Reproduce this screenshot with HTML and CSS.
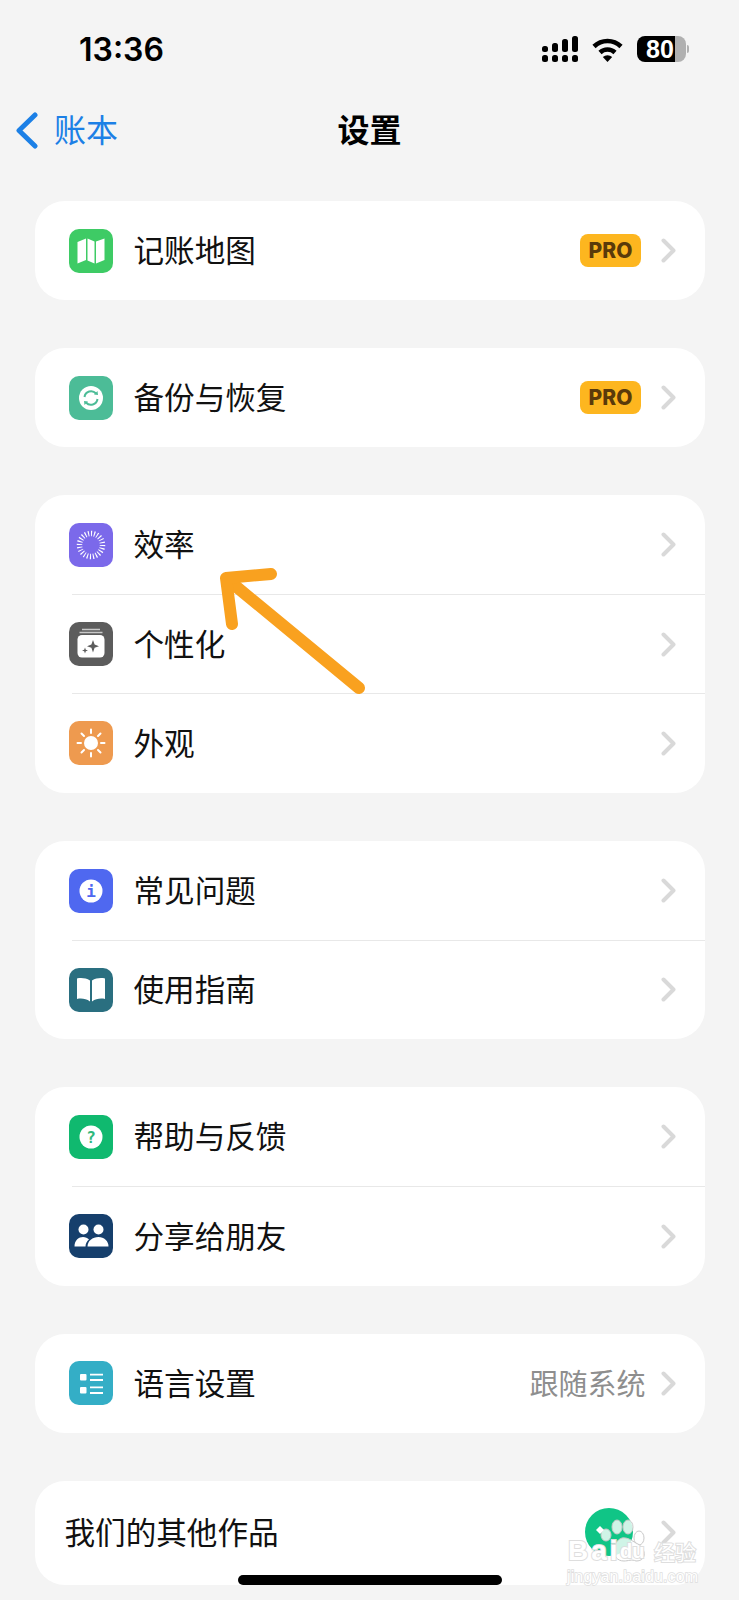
FILE: index.html
```html
<!DOCTYPE html>
<html lang="zh-CN">
<head>
  <meta charset="UTF-8">
  <meta name="viewport" content="width=device-width, initial-scale=1.0">
  <title>设置</title>
  <link rel="stylesheet" href="styles.css">
</head>
<body>
  <svg class="defs" width="0" height="0">
    <symbol id="chev" viewBox="0 0 15 25">
      <path d="M2.5 2.5 L12.5 12.5 L2.5 22.5" fill="none" stroke="currentColor" stroke-width="4" stroke-linecap="round" stroke-linejoin="round"/>
    </symbol>
  </svg>

  <div class="page">
    <div class="status-bar">
      <span class="time">13:36</span>
      <div class="status-icons">
        <svg class="signal" width="36" height="26" viewBox="0 0 36 26" fill="#000">
          <rect x="0" y="10" width="6" height="6" rx="2.5"/><rect x="0" y="19" width="6" height="7" rx="2.5"/>
          <rect x="10" y="7" width="6" height="9" rx="2.5"/><rect x="10" y="19" width="6" height="7" rx="2.5"/>
          <rect x="20" y="3" width="6" height="13" rx="2.5"/><rect x="20" y="19" width="6" height="7" rx="2.5"/>
          <rect x="30" y="0" width="6" height="16" rx="2.5"/><rect x="30" y="19" width="6" height="7" rx="2.5"/>
        </svg>
        <svg class="wifi" width="31" height="25" viewBox="0 0 31 25" fill="none" stroke="#000" stroke-width="4.6">
          <path d="M2 9.5 A19.5 19.5 0 0 1 29 9.5"/>
          <path d="M8 15.5 A11 11 0 0 1 23 15.5"/>
          <path d="M15.5 25 L10.8 20 A7 7 0 0 1 20.2 20 Z" fill="#000" stroke="none"/>
        </svg>
        <div class="battery">80</div>
      </div>
    </div>

    <div class="nav-bar">
      <div class="nav-back">
        <svg width="24" height="37" viewBox="0 0 24 37" fill="none" stroke="currentColor" stroke-width="5" stroke-linecap="round" stroke-linejoin="round">
          <path d="M20 3 L4 18.5 L20 34"/>
        </svg>
        <span class="nav-text">账本</span>
      </div>
      <div class="nav-title nav-text">设置</div>
    </div>

    <main class="cards">
      <section class="card">
        <div class="row">
          <svg class="icon bg-map" viewBox="0 0 44 44" fill="#fff">
            <path d="M8.5 13 L17 9.5 V31 L8.5 34.5 Z"/><path d="M18.5 9.5 L25.5 12.5 V34.5 L18.5 31.5 Z"/><path d="M27 12.5 L35.5 9.5 V31 L27 34.5 Z"/>
          </svg>
          <span class="label">记账地图</span>
          <span class="badge">PRO</span>
          <svg class="chevron"><use href="#chev"/></svg>
        </div>
      </section>

      <section class="card">
        <div class="row">
          <svg class="icon bg-sync" viewBox="0 0 44 44">
            <circle cx="22" cy="22" r="12" fill="#fff"/>
            <g fill="none" stroke="#4cbc97" stroke-width="2">
              <path d="M15.5 21 A6.6 6.6 0 0 1 27 17.5"/><path d="M28.5 23 A6.6 6.6 0 0 1 17 26.5"/>
            </g>
            <path d="M25 18.5 L29 19 L28.5 15 Z M19 25.5 L15 25 L15.5 29 Z" fill="#4cbc97"/>
          </svg>
          <span class="label">备份与恢复</span>
          <span class="badge">PRO</span>
          <svg class="chevron"><use href="#chev"/></svg>
        </div>
      </section>

      <section class="card">
        <div class="row">
          <svg class="icon bg-speed" viewBox="0 0 44 44">
            <circle cx="22" cy="22" r="11.5" fill="none" stroke="#fff" stroke-width="5.5" pathLength="24" stroke-dasharray=".36 .64"/>
          </svg>
          <span class="label">效率</span>
          <svg class="chevron"><use href="#chev"/></svg>
        </div>
        <div class="sep"></div>
        <div class="row">
          <svg class="icon bg-jar" viewBox="0 0 44 44">
            <path d="M13 7.5 H31 M10.5 10.5 H33.5" stroke="#c9c9c9" stroke-width="1.6" fill="none"/>
            <rect x="8.5" y="13" width="27" height="22.5" rx="4.5" fill="#fff"/>
            <path d="M24 18 L25.6 22.6 L30 24.2 L25.6 25.8 L24 30.4 L22.4 25.8 L18 24.2 L22.4 22.6 Z" fill="#5c5c5c"/>
            <path d="M16 25.5 L16.8 27.7 L19 28.5 L16.8 29.3 L16 31.5 L15.2 29.3 L13 28.5 L15.2 27.7 Z" fill="#5c5c5c"/>
          </svg>
          <span class="label">个性化</span>
          <svg class="chevron"><use href="#chev"/></svg>
        </div>
        <div class="sep"></div>
        <div class="row">
          <svg class="icon bg-sun" viewBox="0 0 44 44">
            <circle cx="22" cy="22" r="7" fill="#fff"/>
            <path d="M22 8.5 V12 M22 32 V35.5 M8.5 22 H12 M32 22 H35.5 M12.5 12.5 L15 15 M29 29 L31.5 31.5 M31.5 12.5 L29 15 M15 29 L12.5 31.5" stroke="#fff" stroke-width="2" stroke-linecap="round"/>
          </svg>
          <span class="label">外观</span>
          <svg class="chevron"><use href="#chev"/></svg>
        </div>
      </section>

      <section class="card">
        <div class="row">
          <svg class="icon bg-info" viewBox="0 0 44 44">
            <circle cx="22" cy="22" r="11.5" fill="#fff"/>
            <text x="22" y="27.5" class="glyph" fill="#4f68f0">i</text>
          </svg>
          <span class="label">常见问题</span>
          <svg class="chevron"><use href="#chev"/></svg>
        </div>
        <div class="sep"></div>
        <div class="row">
          <svg class="icon bg-book" viewBox="0 0 44 44" fill="#fff">
            <path d="M21 12.5 C17 10 12 9.5 8 10.5 V31 C12 30 17 30.5 21 33.5 Z"/>
            <path d="M23 12.5 C27 10 32 9.5 36 10.5 V31 C32 30 27 30.5 23 33.5 Z"/>
          </svg>
          <span class="label">使用指南</span>
          <svg class="chevron"><use href="#chev"/></svg>
        </div>
      </section>

      <section class="card">
        <div class="row">
          <svg class="icon bg-help" viewBox="0 0 44 44">
            <circle cx="22" cy="22" r="11.5" fill="#fff"/>
            <text x="22" y="27.5" class="glyph" fill="#2fb87c">?</text>
          </svg>
          <span class="label">帮助与反馈</span>
          <svg class="chevron"><use href="#chev"/></svg>
        </div>
        <div class="sep"></div>
        <div class="row">
          <svg class="icon bg-share" viewBox="0 0 44 44" fill="#fff">
            <circle cx="14.5" cy="15.5" r="5"/><circle cx="29.5" cy="15.5" r="5"/>
            <path d="M5.5 32.5 C5.5 26 10 23 14 23 C16.5 23 18.5 24 20 25.5 C18 27 16.5 29.5 16.5 32.5 Z"/>
            <path d="M18.5 32.5 C18.5 27 23.5 23 29.5 23 C35 23 39.5 27 39.5 32.5 Z"/>
          </svg>
          <span class="label">分享给朋友</span>
          <svg class="chevron"><use href="#chev"/></svg>
        </div>
      </section>

      <section class="card">
        <div class="row">
          <svg class="icon bg-lang" viewBox="0 0 44 44">
            <rect x="11" y="13" width="6.5" height="6.5" rx="1" fill="#fff"/>
            <rect x="11" y="26" width="6.5" height="6.5" rx="1" fill="#fff"/>
            <path d="M21 13.7 H34 M21 19 H34 M21 26.3 H34 M21 32 H34" stroke="#fff" stroke-width="1.8"/>
          </svg>
          <span class="label">语言设置</span>
          <span class="value">跟随系统</span>
          <svg class="chevron"><use href="#chev"/></svg>
        </div>
      </section>

      <section class="card">
        <div class="row row-plain">
          <span class="label">我们的其他作品</span>
          <svg class="chevron"><use href="#chev"/></svg>
        </div>
      </section>
    </main>

    <!-- annotation drawn on top of the screenshot -->
    <svg class="arrow" width="739" height="1600" viewBox="0 0 739 1600" fill="none" stroke="#f9a11f" stroke-width="12" stroke-linecap="round" stroke-linejoin="round">
      <path d="M359 688 L227 579"/>
      <path d="M271 574 L226 578 L232 624"/>
    </svg>

    <div class="home-bar"></div>

    <svg class="watermark" width="150" height="100" viewBox="0 0 150 100">
      <circle cx="49" cy="37" r="24" fill="#10c586"/>
      <g fill="#fff" fill-opacity=".8" stroke="#c9c9c9">
        <ellipse cx="46" cy="40" rx="5" ry="6"/>
        <ellipse cx="57" cy="32" rx="5" ry="7"/>
        <ellipse cx="68" cy="32" rx="5" ry="7"/>
        <ellipse cx="79" cy="43" rx="5" ry="7"/>
        <path d="M62 43 C52 46 50 66 64 66 C68 66 72 64 76 66 C88 66 86 52 76 48 C72 46 68 42 62 43 Z"/>
      </g>
      <path d="M36 35 L40 31 L44 35 L40 39 Z" fill="#fff"/>
      <g class="wm-text">
        <text x="8" y="65" class="wm-latin">Bai</text>
        <text x="60" y="63" class="wm-du">du</text>
        <text x="94" y="65" class="wm-cjk">经验</text>
        <text x="7" y="87" class="wm-url" textLength="131">jingyan.baidu.com</text>
      </g>
    </svg>
  </div>
</body>
</html>
```

FILE: styles.css
```css
* {
  box-sizing: border-box;
}
body {
  margin: 0;
  padding: 0;
  background: #f4f4f4;
  font-family: "Noto Sans CJK SC", "Noto Sans", sans-serif;
  color: #111;
}
.defs {
  display: block;
  height: 0;
}
.page {
  position: relative;
  width: 739px;
  height: 1600px;
  overflow: hidden;
}

.status-bar {
  display: flex;
  align-items: center;
  justify-content: space-between;
  height: 98px;
  padding: 0 53px 0 79px;
}
.time {
  font-family: Inter, "Liberation Sans", sans-serif;
  font-size: 32px;
  font-weight: 600;
  color: #000;
}
.status-icons {
  display: flex;
  align-items: center;
  gap: 14px;
}
.battery {
  position: relative;
  width: 49px;
  height: 26px;
  padding-left: 9px;
  border-radius: 8px;
  background: linear-gradient(90deg, #000 78%, #b0b0b0 78%);
  color: #fff;
  font-family: "Liberation Sans", sans-serif;
  font-size: 25px;
  font-weight: 700;
  line-height: 26px;
}
.battery::after {
  content: "";
  position: absolute;
  top: 9px;
  right: -3px;
  width: 2px;
  height: 8px;
  border-radius: 0 2px 2px 0;
  background: #b0b0b0;
}

.nav-bar {
  display: grid;
  grid-template-columns: 1fr auto 1fr;
  align-items: center;
  height: 64px;
  margin-bottom: 2px;
}
.nav-back {
  display: flex;
  align-items: center;
  gap: 15px;
  padding-left: 15px;
  color: #1c80e6;
}
.nav-text {
  padding-bottom: 4px;
  font-size: 32px;
}
.nav-title {
  font-weight: 700;
  color: #000;
}

.cards {
  display: flex;
  flex-direction: column;
  gap: 48px;
  padding: 37px 34.5px 0;
}
.card {
  background: #fff;
  border-radius: 30px;
}
.row {
  display: flex;
  align-items: center;
  height: 99.2px;
  padding: 0 28.5px 0 34px;
  gap: 15.5px;
}
.row-plain {
  height: 104px;
  padding-left: 30px;
}
.sep {
  height: 1px;
  margin: -0.5px 0 -0.5px 37px;
  background: #e8e8e8;
}
.icon {
  flex: none;
  width: 44px;
  height: 44px;
  margin-right: 5.5px;
  border-radius: 10px;
}
.label {
  flex: 1;
  padding-bottom: 3px;
  font-size: 30.6px;
  line-height: 40px;
}
.value {
  padding-bottom: 3px;
  font-size: 29px;
  color: #8e8e8e;
}
.badge {
  width: 61px;
  height: 33px;
  margin-right: 4.5px;
  border-radius: 8px;
  background: #fdb61f;
  color: #5a3a0a;
  font-family: Inter, sans-serif;
  font-size: 21px;
  font-weight: 800;
  line-height: 33px;
  text-align: center;
}
.chevron {
  flex: none;
  width: 15px;
  height: 25px;
  color: #d9d9d9;
}

.bg-map { background: #3ecb65; }
.bg-sync { background: #4cbc97; }
.bg-speed { background: #7b69ea; }
.bg-jar { background: #5c5c5c; }
.bg-sun { background: #ee9a4f; }
.bg-info { background: #4f68f0; }
.bg-book { background: #2a6f80; }
.bg-help { background: #10b96f; }
.bg-share { background: #163f6c; }
.bg-lang { background: #34aec6; }

.glyph {
  font-family: "DejaVu Sans Mono", monospace;
  font-size: 16px;
  font-weight: 700;
  text-anchor: middle;
}

.arrow {
  position: absolute;
  top: 0;
  left: 0;
  pointer-events: none;
}
.home-bar {
  position: absolute;
  top: 1575px;
  left: 238px;
  width: 264px;
  height: 10px;
  border-radius: 5px;
  background: #000;
}
.watermark {
  position: absolute;
  top: 1495px;
  left: 560px;
  pointer-events: none;
}
.wm-text text {
  fill: #fff;
  stroke: #dedede;
  paint-order: stroke;
  font-family: "Liberation Sans", sans-serif;
}
.wm-text .wm-latin {
  font-size: 28px;
  font-weight: 700;
  letter-spacing: 3px;
  stroke-width: 2;
}
.wm-text .wm-du {
  font-size: 20px;
  font-weight: 700;
  stroke-width: 2;
}
.wm-text .wm-cjk {
  font-family: "Noto Sans CJK SC", sans-serif;
  font-size: 21px;
  stroke-width: 2;
}
.wm-text .wm-url {
  font-size: 16px;
  stroke-width: 1.5;
}
```
